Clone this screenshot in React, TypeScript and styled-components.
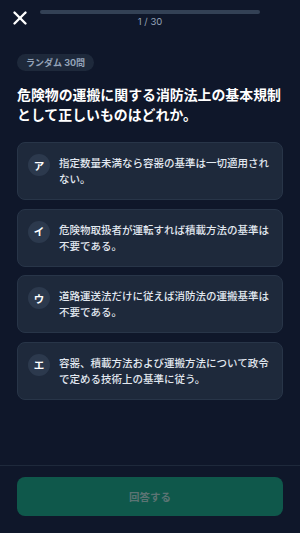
import { useState } from 'react';
import styled, { createGlobalStyle } from 'styled-components';
import { X } from 'lucide-react';

const GlobalStyle = createGlobalStyle`
  html, body, #root {
    margin: 0;
    padding: 0;
    height: 100%;
  }
  body {
    background: #0f172a;
    font-family: 'Inter', 'Noto Sans CJK JP', sans-serif;
    -webkit-font-smoothing: antialiased;
  }
  * {
    box-sizing: border-box;
  }
`;

const choices = [
  { key: 'ア', text: '指定数量未満なら容器の基準は一切適用されない。' },
  { key: 'イ', text: '危険物取扱者が運転すれば積載方法の基準は不要である。' },
  { key: 'ウ', text: '道路運送法だけに従えば消防法の運搬基準は不要である。' },
  { key: 'エ', text: '容器、積載方法および運搬方法について政令で定める技術上の基準に従う。' },
];

const S = {
  Screen: styled.div`
    display: flex;
    flex-direction: column;
    min-height: 100vh;
    background: #0f172a;
    color: #f1f5f9;
  `,

  Header: styled.header`
    display: grid;
    grid-template-columns: 40px 1fr 40px;
    padding-top: 10px;
  `,
  CloseButton: styled.button`
    display: flex;
    align-items: center;
    justify-content: center;
    justify-self: center;
    width: 22px;
    height: 22px;
    margin-top: -3px;
    padding: 0;
    border: none;
    background: none;
    color: #ffffff;
    cursor: pointer;
  `,
  ProgressBox: styled.div`
    display: flex;
    flex-direction: column;
    align-items: center;
    gap: 2px;
  `,
  Track: styled.div`
    width: 100%;
    height: 4px;
    border-radius: 2px;
    background: #334155;
    overflow: hidden;
  `,
  Fill: styled.div`
    height: 100%;
    background: #10b981;
  `,
  Counter: styled.span`
    font-size: 9.5px;
    line-height: 12px;
    color: #94a3b8;
  `,

  Main: styled.main`
    flex: 1;
    display: flex;
    flex-direction: column;
    align-items: flex-start;
    padding: 25px 17px 0;
  `,
  Badge: styled.span`
    display: inline-flex;
    align-items: center;
    height: 17px;
    padding: 0 9px;
    border-radius: 999px;
    background: #1e293b;
    color: #94a3b8;
    font-size: 9px;
    font-weight: 700;
  `,
  Question: styled.h1`
    margin: 15px 0 17px;
    font-size: 13.9px;
    line-height: 19.6px;
    font-weight: 700;
    color: #ffffff;
  `,
  ChoiceList: styled.ul`
    display: flex;
    flex-direction: column;
    gap: 8.5px;
    width: 100%;
    margin: 0;
    padding: 0;
    list-style: none;
  `,
  Choice: styled.li<{ $selected: boolean }>`
    display: flex;
    align-items: flex-start;
    gap: 9px;
    padding: 11px 10px;
    border: 1px solid ${({ $selected }) => ($selected ? '#10b981' : '#283548')};
    border-radius: 8px;
    background: #1e293b;
    cursor: pointer;
  `,
  ChoiceKey: styled.span`
    flex: none;
    display: flex;
    align-items: center;
    justify-content: center;
    width: 22px;
    height: 22px;
    border-radius: 50%;
    background: #2c394d;
    color: #ffffff;
    font-size: 10.5px;
    font-weight: 700;
  `,
  ChoiceText: styled.span`
    flex: 1;
    margin-top: 2px;
    font-size: 10.5px;
    line-height: 16px;
    font-weight: 500;
    color: #e2e8f0;
  `,

  Footer: styled.footer`
    padding: 11px 17px 17px;
    border-top: 1px solid #1e293b;
  `,
  SubmitButton: styled.button`
    width: 100%;
    height: 39px;
    border: none;
    border-radius: 8px;
    background: #0f584b;
    color: #5c7474;
    font-family: inherit;
    font-size: 10.5px;
    font-weight: 700;
    cursor: pointer;

    &:disabled {
      cursor: default;
    }
  `,
};

function App() {
  const [selected, setSelected] = useState<string | null>(null);
  const current = 1;
  const total = 30;

  return (
    <>
      <GlobalStyle />
      <S.Screen>
        <S.Header>
          <S.CloseButton aria-label="閉じる">
            <X size={22} strokeWidth={2.6} />
          </S.CloseButton>
          <S.ProgressBox>
            <S.Track>
              <S.Fill style={{ width: selected ? `${(current / total) * 100}%` : '0%' }} />
            </S.Track>
            <S.Counter>
              {current} / {total}
            </S.Counter>
          </S.ProgressBox>
        </S.Header>

        <S.Main>
          <S.Badge>ランダム 30問</S.Badge>
          <S.Question>危険物の運搬に関する消防法上の基本規制として正しいものはどれか。</S.Question>
          <S.ChoiceList>
            {choices.map((c) => (
              <S.Choice
                key={c.key}
                $selected={selected === c.key}
                onClick={() => setSelected(c.key)}
              >
                <S.ChoiceKey>{c.key}</S.ChoiceKey>
                <S.ChoiceText>{c.text}</S.ChoiceText>
              </S.Choice>
            ))}
          </S.ChoiceList>
        </S.Main>

        <S.Footer>
          <S.SubmitButton disabled={!selected}>回答する</S.SubmitButton>
        </S.Footer>
      </S.Screen>
    </>
  );
}

export default App;
